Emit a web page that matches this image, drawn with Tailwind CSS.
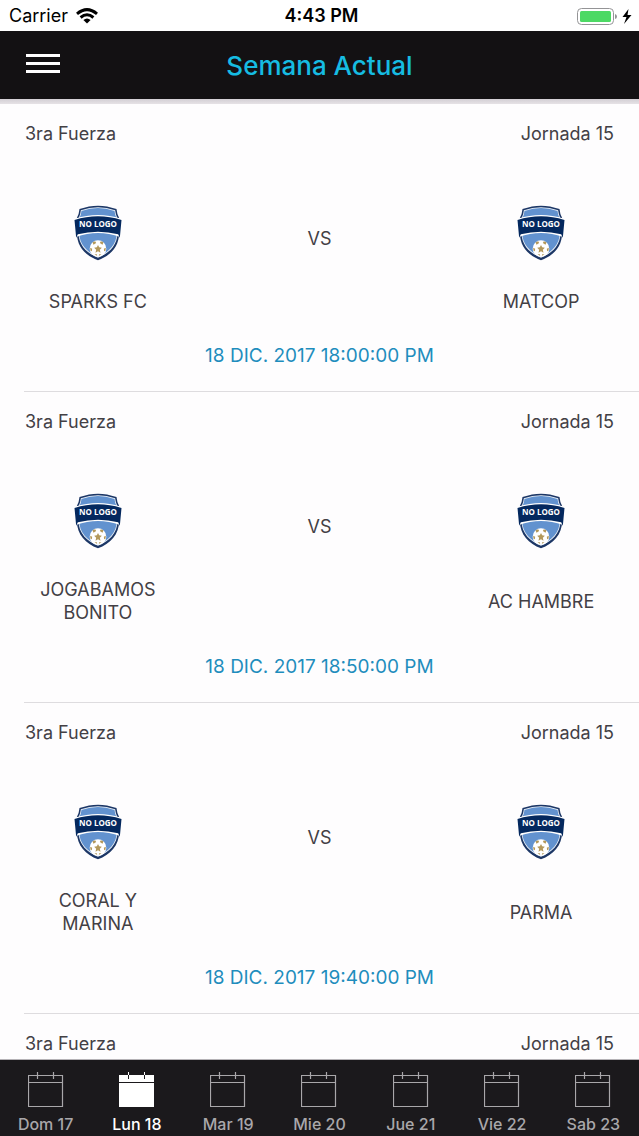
<!DOCTYPE html>
<html lang="es">
<head>
<meta charset="utf-8">
<meta name="viewport" content="width=device-width, initial-scale=1">
<title>Semana Actual</title>
<script src="https://cdn.jsdelivr.net/npm/@tailwindcss/browser@4"></script>
</head>
<body class="flex h-screen flex-col overflow-hidden bg-[#fefdfe] font-['Inter','Liberation_Sans',sans-serif] text-[#434045]">

<svg class="hidden" aria-hidden="true">
  <symbol id="shield" viewBox="40 29 143 168">
    <path d="M56 41Q85 31 111.500 31Q138 31 167 41Q168 55 175 68V112C175 154 148 181 111.500 195C75 181 48 154 48 112V68Q55 55 56 41Z" fill="#1d3766"/>
    <path d="M60 45Q86 36 111.500 36Q137 36 163 45Q164 57 170 70V112C170 150 144 174 111.500 187C79 174 53 150 53 112V70Q59 57 60 45Z" fill="#e9f0f8"/>
    <path d="M62 47Q88 38 111.500 38Q135 38 161 47Q162 59 168 70V112C168 148 142 172 111.500 184C81 172 55 148 55 112V70Q61 59 62 47Z" fill="#6292cf"/>
    <circle cx="111.500" cy="160" r="25" fill="#fff"/>
    <path d="M111.500 149l3.500 7 8 1-6 6 2 9-7.500-4-7.500 4 2-9-6-6 8-1zM95 141l8-3 3 5-8 5zM128 141l-8-3-3 5 8 5zM88 157l6 3-1 8-4-2zM135 157l-6 3 1 8 4-2zM101 176l7 1 1 5zM122 176l-7 1-1 5z" fill="#b3985a"/>
    <path d="M42 70Q77 59 111.500 59Q146 59 181 70L178 125Q144 113 111.500 113Q79 113 45 125Z" fill="#fff"/>
    <path d="M41 74Q76 63 111.500 63Q147 63 182 74L177 127L172 117Q142 109 111.500 109Q81 109 51 117L46 127Z" fill="#04285e"/>
    <text x="111.500" y="96" text-anchor="middle" font-family="Open Sans, sans-serif" font-weight="700" font-size="24" fill="#fff">NO LOGO</text>
  </symbol>
  <symbol id="calendar" viewBox="0 0 36 36">
    <path d="M.5 3.500h34v31H.5zM.5 10.500h34M9.500 0v7M25.500 0v7" fill="none" stroke="currentColor" stroke-width="1.200"/>
  </symbol>
  <symbol id="calendar-full" viewBox="0 0 36 36">
    <path d="M0 3h35v32H0z" fill="currentColor"/>
    <path d="M9.500 0v3M25.500 0v3" stroke="currentColor"/>
    <path d="M0 10.500h35M9.500 3v4M25.500 3v4" stroke="#1b191c"/>
  </symbol>
</svg>

<div class="flex h-[31px] shrink-0 items-center bg-white px-[9px] text-[18px] text-black">
  <div class="flex flex-1 items-center gap-2">
    <span>Carrier</span>
    <svg class="h-4 w-[22px]" viewBox="0 0 22 16" fill="none" stroke="#000" stroke-width="3" aria-label="Wi-Fi"><path d="M1 5.800Q11-2.600 21 5.800"/><path d="M4.600 9.500Q11 4 17.400 9.500"/><path d="M7.400 12Q11 8.800 14.600 12L11 15.500Z" fill="#000" stroke="none"/></svg>
  </div>
  <span class="font-semibold">4:43 PM</span>
  <div class="-mr-1 flex flex-1 justify-end">
    <svg class="h-[18px] w-[60px]" viewBox="0 0 60 18" aria-label="Batería"><rect x="3.500" y="1.500" width="36" height="16" rx="4" fill="#fff" stroke="#949496"/><rect x="6" y="4" width="31" height="11" rx="1.500" fill="#4cd964"/><path d="M41 7q2 .5 2 2.500t-2 2.500z" fill="#949496"/><path d="M54.500 2L48.500 10h4L50 17l7.500-9h-4z" fill="#000"/></svg>
  </div>
</div>

<header class="grid h-[68px] shrink-0 grid-cols-[1fr_auto_1fr] items-center bg-[#131113] px-[26px]">
  <button type="button" aria-label="Menú" class="flex w-[34px] flex-col gap-[5px] pt-2 pb-[11px]">
    <span class="h-[3px] bg-white"></span><span class="h-[3px] bg-white"></span><span class="h-[3px] bg-white"></span>
  </button>
  <h1 class="text-[26px] font-medium text-[#16bce2]">Semana Actual</h1>
</header>
<div class="h-[5px] shrink-0 bg-linear-to-b from-[#d3cfd4] to-[#e6e2e6]"></div>

<main class="min-h-0 flex-1 overflow-hidden text-[18px] leading-[23px]">
  <article>
    <div class="flex justify-between px-[25px] pt-[18px]"><span>3ra Fuerza</span><span>Jornada 15</span></div>
    <div class="grid grid-cols-4 px-6 pt-[60px] text-center">
      <svg class="h-14 w-12 justify-self-center" role="img" aria-label="Sin logo"><use href="#shield"/></svg>
      <span class="col-span-2 self-center pt-[10px]">VS</span>
      <svg class="h-14 w-12 justify-self-center" role="img" aria-label="Sin logo"><use href="#shield"/></svg>
    </div>
    <div class="grid grid-cols-4 items-center px-6 pt-[29px] text-center"><span class="px-3">SPARKS FC</span><span class="col-start-4">MATCOP</span></div>
    <p class="pt-[31px] text-center text-[19px] text-[#1f8dbd]">18 DIC. 2017 18:00:00 PM</p>
    <hr class="mt-6 ml-6 border-[#dedcdf]">
  </article>
  <article>
    <div class="flex justify-between px-[25px] pt-[18px]"><span>3ra Fuerza</span><span>Jornada 15</span></div>
    <div class="grid grid-cols-4 px-6 pt-[60px] text-center">
      <svg class="h-14 w-12 justify-self-center" role="img" aria-label="Sin logo"><use href="#shield"/></svg>
      <span class="col-span-2 self-center pt-[10px]">VS</span>
      <svg class="h-14 w-12 justify-self-center" role="img" aria-label="Sin logo"><use href="#shield"/></svg>
    </div>
    <div class="grid grid-cols-4 items-center px-6 pt-[29px] text-center"><span class="px-3">JOGABAMOS BONITO</span><span class="col-start-4">AC HAMBRE</span></div>
    <p class="pt-[31px] text-center text-[19px] text-[#1f8dbd]">18 DIC. 2017 18:50:00 PM</p>
    <hr class="mt-6 ml-6 border-[#dedcdf]">
  </article>
  <article>
    <div class="flex justify-between px-[25px] pt-[18px]"><span>3ra Fuerza</span><span>Jornada 15</span></div>
    <div class="grid grid-cols-4 px-6 pt-[60px] text-center">
      <svg class="h-14 w-12 justify-self-center" role="img" aria-label="Sin logo"><use href="#shield"/></svg>
      <span class="col-span-2 self-center pt-[10px]">VS</span>
      <svg class="h-14 w-12 justify-self-center" role="img" aria-label="Sin logo"><use href="#shield"/></svg>
    </div>
    <div class="grid grid-cols-4 items-center px-6 pt-[29px] text-center"><span class="px-3">CORAL Y MARINA</span><span class="col-start-4">PARMA</span></div>
    <p class="pt-[31px] text-center text-[19px] text-[#1f8dbd]">18 DIC. 2017 19:40:00 PM</p>
    <hr class="mt-6 ml-6 border-[#dedcdf]">
  </article>
  <article>
    <div class="flex justify-between px-[25px] pt-[18px]"><span>3ra Fuerza</span><span>Jornada 15</span></div>
  </article>
</main>

<nav class="grid h-[77px] shrink-0 grid-cols-7 border-t border-[#b5b2b6] bg-[#1b191c] text-[16px] leading-6 font-medium text-[#a9a7aa]">
  <button type="button" class="flex flex-col items-center gap-1 pt-3"><svg class="size-9"><use href="#calendar"/></svg>Dom 17</button>
  <button type="button" aria-current="page" class="flex flex-col items-center gap-1 pt-3 text-white"><svg class="size-9"><use href="#calendar-full"/></svg>Lun 18</button>
  <button type="button" class="flex flex-col items-center gap-1 pt-3"><svg class="size-9"><use href="#calendar"/></svg>Mar 19</button>
  <button type="button" class="flex flex-col items-center gap-1 pt-3"><svg class="size-9"><use href="#calendar"/></svg>Mie 20</button>
  <button type="button" class="flex flex-col items-center gap-1 pt-3"><svg class="size-9"><use href="#calendar"/></svg>Jue 21</button>
  <button type="button" class="flex flex-col items-center gap-1 pt-3"><svg class="size-9"><use href="#calendar"/></svg>Vie 22</button>
  <button type="button" class="flex flex-col items-center gap-1 pt-3"><svg class="size-9"><use href="#calendar"/></svg>Sab 23</button>
</nav>
</body>
</html>
